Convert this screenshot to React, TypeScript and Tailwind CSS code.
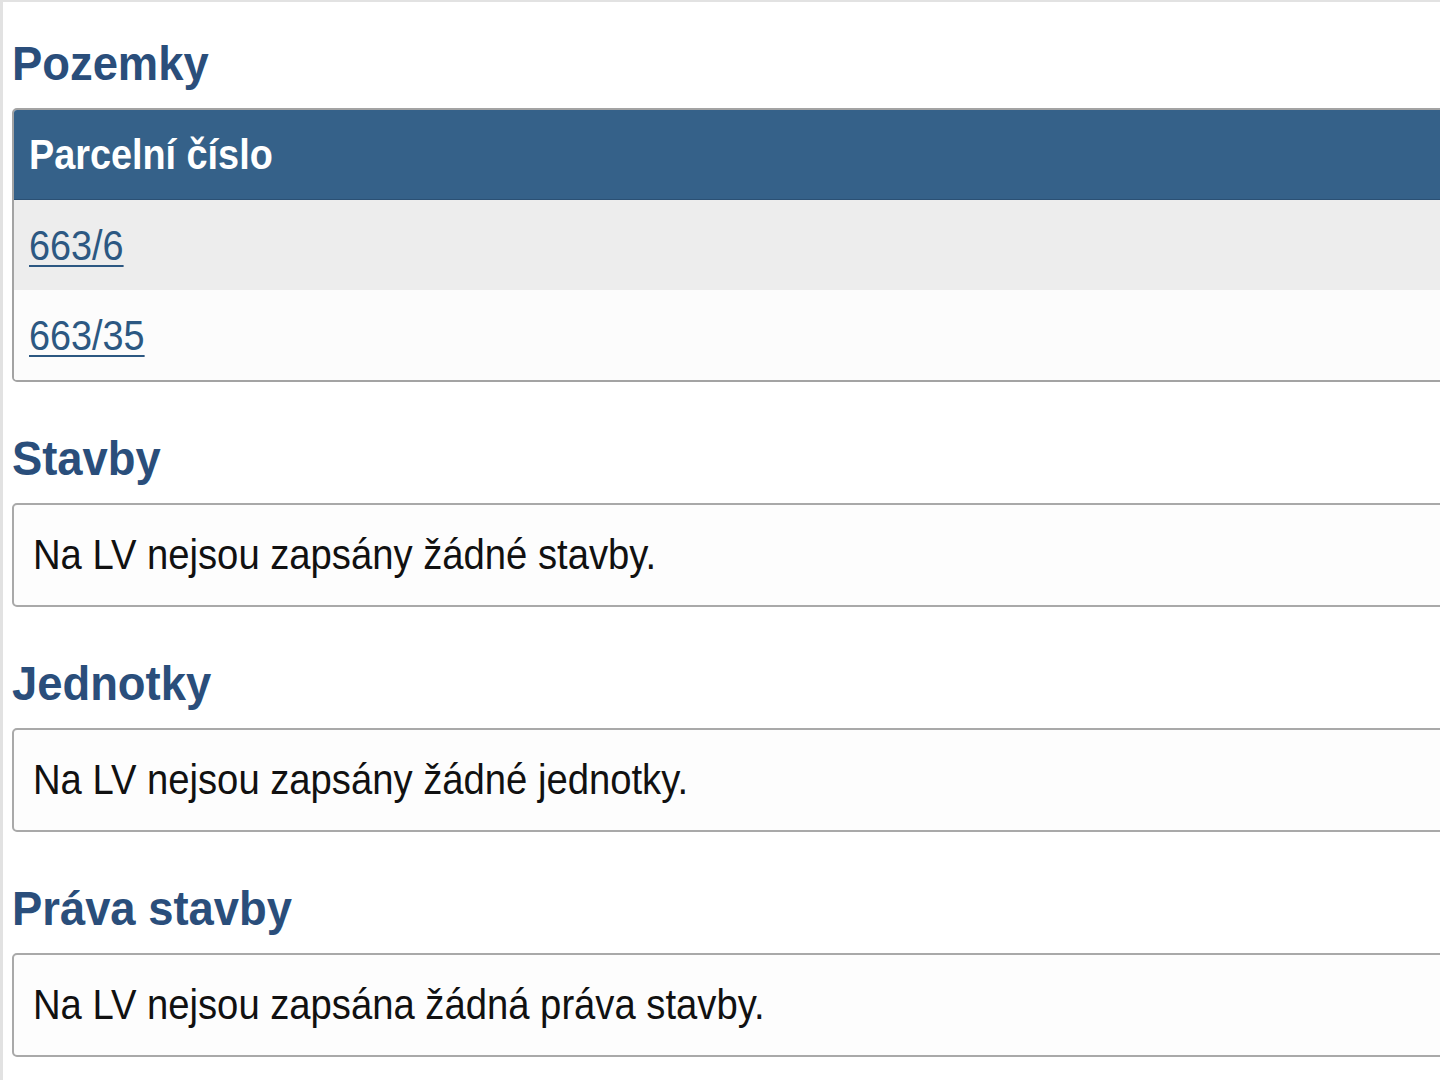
import React from "react";

const font = { fontFamily: '"Liberation Sans", Arial, Helvetica, sans-serif' };

function Heading({ children, first }: { children: React.ReactNode; first?: boolean }) {
  return (
    <h2
      className={`${first ? "mt-[34px]" : "mt-[49px]"} mb-[16px] text-[48px] leading-[56px] font-bold text-[#2a4e7b] whitespace-nowrap`}
    >
      <span className="inline-block origin-left scale-x-[0.945]">{children}</span>
    </h2>
  );
}

function EmptyBox({ text }: { text: string }) {
  return (
    <div className="w-[1500px] rounded-[5px] border-2 border-[#a9a9a9] bg-[#fdfdfd] py-[25px] pl-[19px] text-[42px] leading-[50px] text-[#111111] whitespace-nowrap">
      <span className="inline-block origin-left scale-x-[0.91]">{text}</span>
    </div>
  );
}

export default function App() {
  return (
    <div
      className="w-[1440px] h-[1080px] overflow-hidden bg-white border-l-[3px] border-t-2 border-[#e2e2e2] pl-[9px]"
      style={font}
    >
      <Heading first>Pozemky</Heading>
      <div className="w-[1500px] overflow-hidden rounded-[5px] border-2 border-[#a3a3a3]">
        <div className="h-[90px] flex items-center bg-[#356189] border-b border-[#2b5074] pl-[15px] text-[42px] font-bold text-white whitespace-nowrap">
          <span className="inline-block origin-left scale-x-90">Parcelní číslo</span>
        </div>
        <div className="h-[90px] flex items-center bg-[#ededed] pl-[15px] text-[42px]">
          <a
            href="#"
            className="inline-block origin-left scale-x-90 text-[#2c5882] underline decoration-2 underline-offset-[5px]"
          >
            663/6
          </a>
        </div>
        <div className="h-[90px] flex items-center bg-[#fcfcfc] pl-[15px] text-[42px]">
          <a
            href="#"
            className="inline-block origin-left scale-x-90 text-[#2c5882] underline decoration-2 underline-offset-[5px]"
          >
            663/35
          </a>
        </div>
      </div>
      <Heading>Stavby</Heading>
      <EmptyBox text="Na LV nejsou zapsány žádné stavby." />
      <Heading>Jednotky</Heading>
      <EmptyBox text="Na LV nejsou zapsány žádné jednotky." />
      <Heading>Práva stavby</Heading>
      <EmptyBox text="Na LV nejsou zapsána žádná práva stavby." />
    </div>
  );
}
